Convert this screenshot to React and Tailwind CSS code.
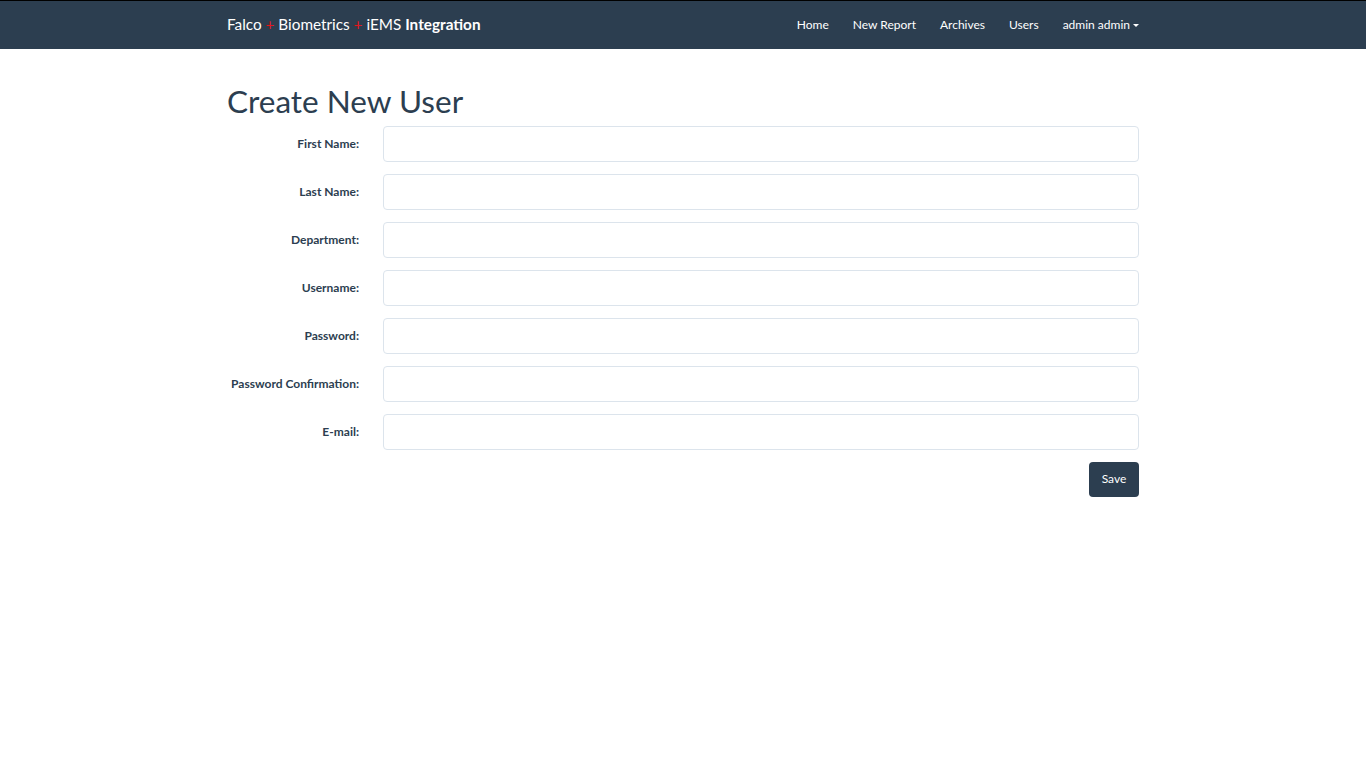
import React from 'react';

const fields = [
  'First Name:',
  'Last Name:',
  'Department:',
  'Username:',
  'Password:',
  'Password Confirmation:',
  'E-mail:',
];

const Navbar = () => (
  <nav className="bg-[#2c3e50] border-t border-black h-[49px]">
    <div className="w-[912px] mx-auto h-full flex items-center justify-between">
      <div className="text-[15.3px] text-white leading-none">
        Falco <span className="text-[#e3161c]">+</span> Biometrics{' '}
        <span className="text-[#e3161c]">+</span> iEMS <span className="font-bold">Integration</span>
      </div>
      <ul className="flex items-center text-[12px] text-white">
        <li className="px-3">Home</li>
        <li className="px-3">New Report</li>
        <li className="px-3">Archives</li>
        <li className="px-3">Users</li>
        <li className="pl-3 flex items-center">
          admin admin
          <span className="ml-[3px] mt-[1px] w-0 h-0 border-l-[3.5px] border-r-[3.5px] border-t-[3.5px] border-l-transparent border-r-transparent border-t-white" />
        </li>
      </ul>
    </div>
  </nav>
);

export default function App() {
  return (
    <div className="min-h-screen bg-white text-[#2c3e50]" style={{ fontFamily: 'Lato, "Open Sans", "Liberation Sans", sans-serif' }}>
      <Navbar />
      <main className="w-[912px] mx-auto">
        <h1 className="text-[31.5px] leading-none mt-[37px] mb-[8px]">Create New User</h1>
        <form className="flex flex-col gap-3">
          {fields.map((label) => (
            <div key={label} className="flex items-center">
              <label className="w-[132px] text-right text-[12px] font-bold">{label}</label>
              <input
                type={label.startsWith('Password') ? 'password' : 'text'}
                className="ml-[24px] flex-1 h-[36px] border border-[#dce4ec] rounded-[4px] px-3 outline-none"
              />
            </div>
          ))}
          <div className="flex justify-end">
            <button type="button" className="bg-[#2c3e50] text-white text-[12px] w-[50px] h-[35px] rounded-[4px]">
              Save
            </button>
          </div>
        </form>
      </main>
    </div>
  );
}
